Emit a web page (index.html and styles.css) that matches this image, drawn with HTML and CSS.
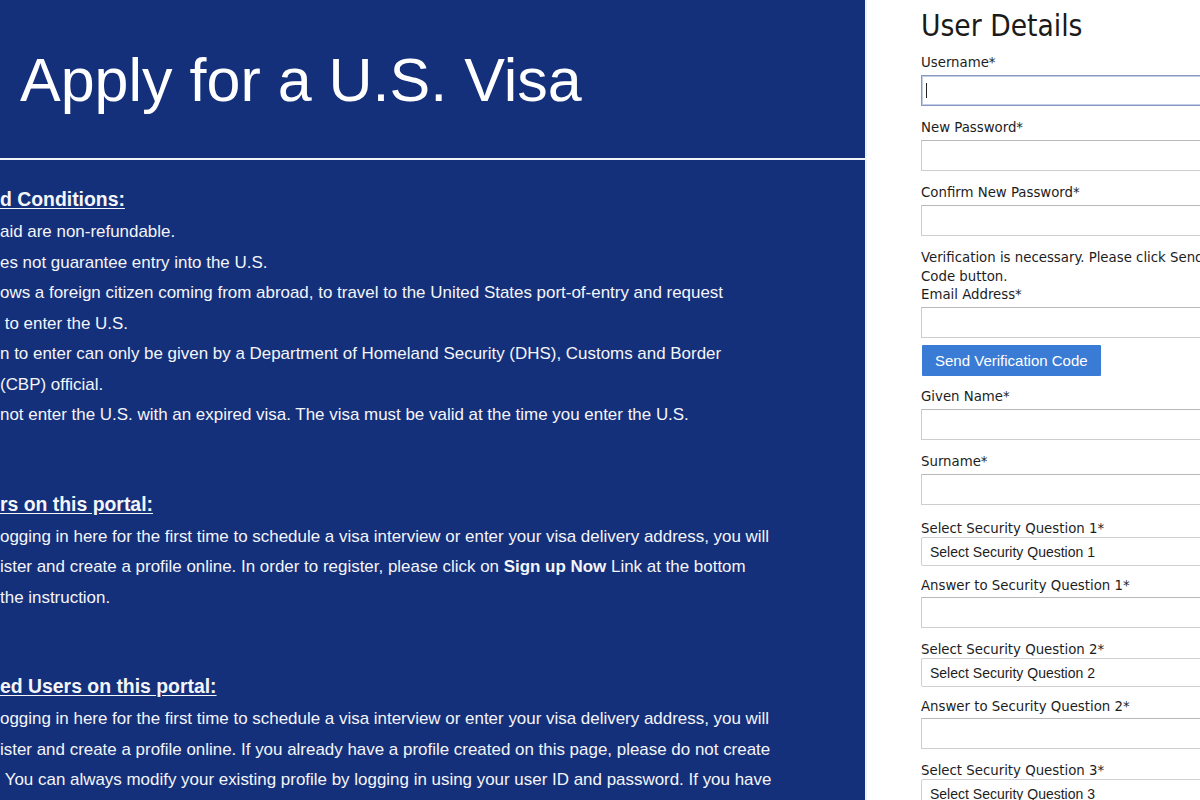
FILE: index.html
```html
<!DOCTYPE html>
<html lang="en">
<head>
<meta charset="utf-8">
<title>Apply for a U.S. Visa</title>
<link rel="stylesheet" href="styles.css">
</head>
<body>
<div class="page">
  <section class="intro">
    <header class="intro-head">
      <h1 class="intro-title">Apply for a U.S. Visa</h1>
    </header>
    <div class="intro-body">
      <div class="block">
        <h2 class="block-title">d Conditions:</h2>
        <p class="line">aid are non-refundable.</p>
        <p class="line">es not guarantee entry into the U.S.</p>
        <p class="line">ows a foreign citizen coming from abroad, to travel to the United States port-of-entry and request</p>
        <p class="line">&nbsp;to enter the U.S.</p>
        <p class="line">n to enter can only be given by a Department of Homeland Security (DHS), Customs and Border</p>
        <p class="line">(CBP) official.</p>
        <p class="line">not enter the U.S. with an expired visa. The visa must be valid at the time you enter the U.S.</p>
      </div>
      <div class="block">
        <h2 class="block-title">rs on this portal:</h2>
        <p class="line">ogging in here for the first time to schedule a visa interview or enter your visa delivery address, you will</p>
        <p class="line">ister and create a profile online. In order to register, please click on <strong>Sign up Now</strong> Link at the bottom</p>
        <p class="line">the instruction.</p>
      </div>
      <div class="block">
        <h2 class="block-title">ed Users on this portal:</h2>
        <p class="line">ogging in here for the first time to schedule a visa interview or enter your visa delivery address, you will</p>
        <p class="line">ister and create a profile online. If you already have a profile created on this page, please do not create</p>
        <p class="line">&nbsp;You can always modify your existing profile by logging in using your user ID and password. If you have</p>
      </div>
    </div>
  </section>

  <aside class="form-panel">
    <h2 class="form-title">User Details</h2>
    <form class="form">
      <label class="label" for="username">Username*</label>
      <div class="input-wrap focused"><input class="input" id="username" type="text"></div>

      <label class="label" for="newpw">New Password*</label>
      <input class="input" id="newpw" type="password">

      <label class="label" for="confpw">Confirm New Password*</label>
      <input class="input" id="confpw" type="password">

      <p class="note">Verification is necessary. Please click Send Verification<br>Code button.</p>
      <label class="label" for="email">Email Address*</label>
      <input class="input input-tight" id="email" type="text">
      <button class="send-btn" type="button">Send Verification Code</button>

      <label class="label" for="given">Given Name*</label>
      <input class="input" id="given" type="text">

      <label class="label" for="surname">Surname*</label>
      <input class="input input-loose" id="surname" type="text">

      <label class="label label-select" for="q1">Select Security Question 1*</label>
      <select class="select" id="q1"><option>Select Security Question 1</option></select>
      <label class="label label-answer" for="a1">Answer to Security Question 1*</label>
      <input class="input" id="a1" type="text">

      <label class="label label-select" for="q2">Select Security Question 2*</label>
      <select class="select" id="q2"><option>Select Security Question 2</option></select>
      <label class="label label-answer" for="a2">Answer to Security Question 2*</label>
      <input class="input" id="a2" type="text">

      <label class="label label-select" for="q3">Select Security Question 3*</label>
      <select class="select" id="q3"><option>Select Security Question 3</option></select>
    </form>
  </aside>
</div>
</body>
</html>
```
FILE: styles.css
```css
html, body {
  margin: 0;
  padding: 0;
  height: 800px;
  overflow: hidden;
  background: #ffffff;
}

.page {
  display: flex;
  width: 1200px;
  height: 800px;
  overflow: hidden;
}

/* ---------- left blue panel ---------- */
.intro {
  flex: 0 0 865px;
  background: #14307b;
  color: #f4f5f8;
  font-family: "Liberation Sans", Arial, sans-serif;
  overflow: hidden;
}

.intro-head {
  height: 158px;
  border-bottom: 2px solid #f2f3f7;
  box-sizing: content-box;
  padding-left: 20px;
}

.intro-title {
  margin: 0;
  padding-top: 45px;
  font-size: 61px;
  line-height: 70px;
  font-weight: normal;
  color: #ffffff;
  white-space: nowrap;
}

.intro-body {
  padding-top: 24px;
}

.block {
  margin-bottom: 58px;
}

.block-title {
  margin: 0 0 3px 0;
  font-size: 19.4px;
  line-height: 30px;
  font-weight: bold;
  text-decoration: underline;
  text-underline-offset: 2px;
  white-space: nowrap;
}

.line {
  margin: 0;
  font-size: 16.95px;
  line-height: 30.5px;
  white-space: nowrap;
}

.line strong {
  font-weight: bold;
}

/* ---------- right form panel ---------- */
.form-panel {
  flex: 1 1 auto;
  background: #ffffff;
  padding-left: 54px;
  border-left: 2px solid #eef1f6;
  overflow: hidden;
  font-family: "DejaVu Sans Condensed", "DejaVu Sans", sans-serif;
  font-stretch: condensed;
  color: #1d1d1d;
}

.form-title {
  margin: 0 0 9px 0;
  padding-top: 8px;
  font-size: 29.6px;
  line-height: 36px;
  font-weight: normal;
  color: #1a1a1a;
  white-space: nowrap;
}

.form {
  display: flex;
  flex-direction: column;
  width: 380px;
}

.label {
  display: block;
  font-size: 14.8px;
  line-height: 18px;
  margin-bottom: 4px;
  white-space: nowrap;
}

.label-select {
  margin-bottom: 0;
}

.label-answer {
  margin-bottom: 3px;
}

.input-wrap {
  position: relative;
  margin-bottom: 12px;
}

.input-wrap .input {
  margin-bottom: 0;
}

.input {
  display: block;
  box-sizing: border-box;
  width: 100%;
  height: 31px;
  margin: 0 0 12px 0;
  padding: 0 6px;
  border: 1px solid #cdcdcd;
  border-top-color: #b9b9b9;
  border-radius: 0;
  background: #ffffff;
  font: 14px "Liberation Sans", Arial, sans-serif;
  outline: none;
}

.focused .input {
  border: 1px solid #8798c4;
  box-shadow: inset 0 0 0 1px #c4cde3;
}

.focused::after {
  content: "";
  position: absolute;
  left: 5px;
  top: 8px;
  width: 1px;
  height: 15px;
  background: #222222;
}

.input-tight {
  margin-bottom: 7px;
}

.input-loose {
  margin-bottom: 14px;
}

.note {
  margin: 0;
  font-size: 14.8px;
  line-height: 18.5px;
  white-space: nowrap;
}

.send-btn {
  align-self: flex-start;
  box-sizing: border-box;
  height: 31px;
  margin: 0 0 11px 1px;
  padding: 0 13px;
  border: none;
  border-radius: 1px;
  background: #3a7bd6;
  color: #ffffff;
  font: 15px "Liberation Sans", Arial, sans-serif;
  white-space: nowrap;
}

.select {
  display: block;
  box-sizing: border-box;
  width: 100%;
  height: 29px;
  margin: 0 0 10px 0;
  padding: 0 8px;
  border: 1px solid #d0d0d0;
  border-radius: 2px;
  background: #ffffff;
  color: #1d1d1d;
  font: 14px "Liberation Sans", Arial, sans-serif;
  -webkit-appearance: none;
  appearance: none;
}
```
